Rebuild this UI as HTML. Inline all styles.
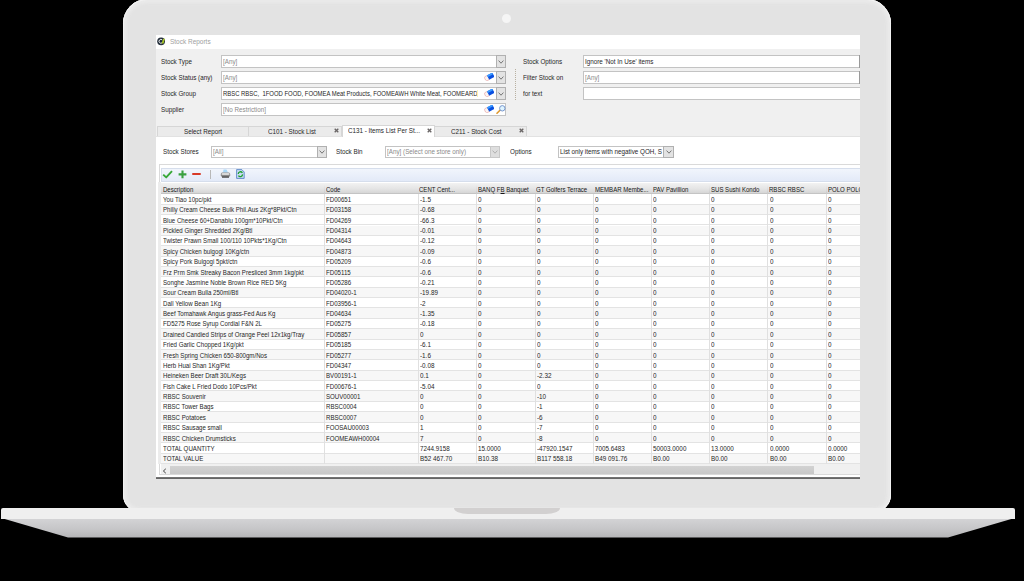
<!DOCTYPE html>
<html><head><meta charset="utf-8">
<style>
html,body{margin:0;padding:0;}
body{width:1024px;height:581px;background:#000;position:relative;overflow:hidden;font-family:"Liberation Sans",sans-serif;}
.a{position:absolute;}
#lid{left:123.1px;top:-1.5px;width:767.9px;height:513px;border-radius:24.5px 24.5px 17px 17px;background:#e3e3e3;box-shadow:inset 0 0 0 1px #f2f2f2, inset 0 0 3px 4px #eaeaea;}
#cam{left:501.5px;top:13.7px;width:9.6px;height:9.6px;border-radius:50%;background:#f5f5f5;}
#bandtop{left:1px;top:508px;width:1014px;height:10.5px;background:#efefef;border-radius:2px 2px 0 0;}
#bandbot{left:0;top:518.5px;width:1024px;height:19px;background:linear-gradient(#d3d3d5,#c4c4c6 60%,#b4b4b6);clip-path:polygon(3px 0,1013px 0,948px 19px,68px 19px);}
#notch{left:454px;top:508px;width:106px;height:6.3px;background:#d2d0d0;border-radius:0 0 14px 14px/0 0 6px 6px;}
#scr{left:156px;top:35px;width:704px;height:444px;overflow:hidden;background:#f0f0f0;}
#pc{left:-156px;top:-35px;width:1024px;height:581px;}
.t{position:absolute;white-space:nowrap;font-size:6.8px;line-height:8px;color:#262626;transform:scaleX(.9);transform-origin:0 0;}
.g{color:#8a8a8a;}
u{text-decoration:underline;}
</style></head><body>
<div id="lid" class="a"></div>
<div id="cam" class="a"></div>
<div id="bandtop" class="a"></div>
<div id="bandbot" class="a"></div>
<div id="notch" class="a"></div>
<div id="scr" class="a">
<div id="pc" class="a">
<div class="a" style="left:156.00px;top:35.00px;width:704.00px;height:13.50px;background:#fff;"></div>
<svg class="a" style="left:157px;top:37px" width="9" height="9" viewBox="0 0 9 9"><circle cx="4.1" cy="4.3" r="3.9" fill="#27313d"/><path d="M5.2 2.9 A1.9 1.9 0 1 0 5.2 5.7" fill="none" stroke="#eef0f2" stroke-width="1.0"/><circle cx="4.0" cy="4.3" r="0.95" fill="#1a2848"/><path d="M4.6 6.6 L6.0 2.0 L7.8 1.4 L6.6 6.4 Z" fill="#a8c820"/></svg>
<div class="t" style="left:169.50px;top:37.60px;transform:scaleX(0.9);color:#a0a0a0;font-size:7.2px;">Stock Reports</div>
<div class="t" style="left:160.50px;top:58.30px;transform:scaleX(0.925);">Stock Type</div>
<div class="t" style="left:160.50px;top:74.30px;transform:scaleX(0.925);">Stock Status (any)</div>
<div class="t" style="left:160.50px;top:90.30px;transform:scaleX(0.925);">Stock Group</div>
<div class="t" style="left:160.50px;top:106.30px;transform:scaleX(0.925);">Supplier</div>
<div class="a" style="left:221.00px;top:55.00px;width:285.20px;height:12.70px;background:#fff;border:1px solid #c3c3c3;box-sizing:border-box;"></div>
<div class="a" style="left:221.00px;top:71.00px;width:285.20px;height:12.70px;background:#fff;border:1px solid #c3c3c3;box-sizing:border-box;"></div>
<div class="a" style="left:221.00px;top:87.00px;width:285.20px;height:12.70px;background:#fff;border:1px solid #c3c3c3;box-sizing:border-box;"></div>
<div class="a" style="left:221.00px;top:103.00px;width:285.20px;height:12.70px;background:#fff;border:1px solid #c3c3c3;box-sizing:border-box;"></div>
<div class="t g" style="left:223.00px;top:58.30px;transform:scaleX(0.925);">[Any]</div>
<div class="t g" style="left:223.00px;top:74.30px;transform:scaleX(0.925);">[Any]</div>
<div class="t" style="left:223.00px;top:90.30px;transform:scaleX(0.87);">RBSC RBSC,&nbsp; 1FOOD FOOD, FOOMEA Meat Products, FOOMEAWH White Meat, FOOMEARD</div>
<div class="t g" style="left:223.00px;top:106.30px;transform:scaleX(0.925);">[No Restriction]</div>
<div class="a" style="left:477.00px;top:89.50px;width:1.20px;height:7.00px;background:#fff2b0;"></div>
<div class="a" style="left:495.90px;top:55.00px;width:10.30px;height:12.70px;background:#e3e3e3;border:1px solid #b0b0b0;box-sizing:border-box;"></div>
<svg class="a" style="left:498.05px;top:59.75px" width="6" height="4" viewBox="0 0 6 4"><path d="M0.6 0.6 L3 3.2 L5.4 0.6" fill="none" stroke="#505050" stroke-width="0.75"/></svg>
<div class="a" style="left:495.90px;top:71.00px;width:10.30px;height:12.70px;background:#e3e3e3;border:1px solid #b0b0b0;box-sizing:border-box;"></div>
<svg class="a" style="left:498.05px;top:75.75px" width="6" height="4" viewBox="0 0 6 4"><path d="M0.6 0.6 L3 3.2 L5.4 0.6" fill="none" stroke="#505050" stroke-width="0.75"/></svg>
<div class="a" style="left:495.90px;top:87.00px;width:10.30px;height:12.70px;background:#e3e3e3;border:1px solid #b0b0b0;box-sizing:border-box;"></div>
<svg class="a" style="left:498.05px;top:91.75px" width="6" height="4" viewBox="0 0 6 4"><path d="M0.6 0.6 L3 3.2 L5.4 0.6" fill="none" stroke="#505050" stroke-width="0.75"/></svg>
<svg class="a" style="left:483.5px;top:72.8px" width="10.5" height="8" viewBox="0 0 10.5 8"><g transform="rotate(-28 5.2 4)"><rect x="0.6" y="1.6" width="4.4" height="4.8" rx="1.6" fill="#fbf4f2" stroke="#e49a9a" stroke-width="0.6"/><rect x="4" y="1.6" width="6" height="4.8" rx="0.9" fill="#0a4fe0"/><rect x="4" y="1.6" width="6" height="1.8" rx="0.7" fill="#3c9cff"/></g></svg>
<svg class="a" style="left:483.5px;top:88.8px" width="10.5" height="8" viewBox="0 0 10.5 8"><g transform="rotate(-28 5.2 4)"><rect x="0.6" y="1.6" width="4.4" height="4.8" rx="1.6" fill="#fbf4f2" stroke="#e49a9a" stroke-width="0.6"/><rect x="4" y="1.6" width="6" height="4.8" rx="0.9" fill="#0a4fe0"/><rect x="4" y="1.6" width="6" height="1.8" rx="0.7" fill="#3c9cff"/></g></svg>
<svg class="a" style="left:483.5px;top:104.8px" width="10.5" height="8" viewBox="0 0 10.5 8"><g transform="rotate(-28 5.2 4)"><rect x="0.6" y="1.6" width="4.4" height="4.8" rx="1.6" fill="#fbf4f2" stroke="#e49a9a" stroke-width="0.6"/><rect x="4" y="1.6" width="6" height="4.8" rx="0.9" fill="#0a4fe0"/><rect x="4" y="1.6" width="6" height="1.8" rx="0.7" fill="#3c9cff"/></g></svg>
<svg class="a" style="left:495.8px;top:104.6px" width="10" height="9" viewBox="0 0 10 9"><line x1="1" y1="8.2" x2="4" y2="5.2" stroke="#e09a30" stroke-width="1.6" stroke-linecap="round"/><circle cx="6.3" cy="3.3" r="2.7" fill="#dff4ff" stroke="#6a8cc8" stroke-width="0.9"/></svg>
<div class="a" style="left:515.30px;top:69.00px;width:1.00px;height:32.00px;background:repeating-linear-gradient(#b8b0a0 0 1px,transparent 1px 2px);"></div>
<div class="t" style="left:522.80px;top:58.30px;transform:scaleX(0.925);">Stock Options</div>
<div class="t" style="left:522.80px;top:74.30px;transform:scaleX(0.925);">Filter Stock on</div>
<div class="t" style="left:522.80px;top:90.30px;transform:scaleX(0.925);">for text</div>
<div class="a" style="left:583.40px;top:55.00px;width:290.00px;height:12.70px;background:#fff;border:1px solid #c3c3c3;box-sizing:border-box;"></div>
<div class="a" style="left:583.40px;top:71.00px;width:290.00px;height:12.70px;background:#fff;border:1px solid #c3c3c3;box-sizing:border-box;"></div>
<div class="a" style="left:583.40px;top:87.00px;width:290.00px;height:12.70px;background:#fff;border:1px solid #c3c3c3;box-sizing:border-box;"></div>
<div class="a" style="left:858.60px;top:55.00px;width:1.40px;height:12.70px;background:#9a9a9a;"></div>
<div class="a" style="left:858.60px;top:71.00px;width:1.40px;height:12.70px;background:#9a9a9a;"></div>
<div class="t" style="left:585.00px;top:58.30px;transform:scaleX(0.925);">Ignore 'Not In Use' items</div>
<div class="t g" style="left:585.00px;top:74.30px;transform:scaleX(0.925);">[Any]</div>
<div class="a" style="left:157.00px;top:126.00px;width:92.40px;height:10.20px;background:#ebebeb;border:1px solid #d6d6d6;border-bottom:none;box-sizing:border-box;"></div>
<div class="a" style="left:249.40px;top:126.00px;width:92.60px;height:10.20px;background:#ebebeb;border:1px solid #d6d6d6;border-bottom:none;box-sizing:border-box;border-left:none;"></div>
<div class="a" style="left:435.30px;top:126.00px;width:91.60px;height:10.20px;background:#ebebeb;border:1px solid #d6d6d6;border-bottom:none;box-sizing:border-box;border-left:none;"></div>
<div class="a" style="left:156.00px;top:136.00px;width:704.00px;height:342.00px;background:#fff;border-top:1px solid #e2e2e2;box-sizing:border-box;"></div>
<div class="a" style="left:342.00px;top:125.00px;width:93.30px;height:12.00px;background:#fff;border:1px solid #d6d6d6;border-bottom:none;box-sizing:border-box;"></div>
<div class="t" style="left:184.00px;top:127.70px;transform:scaleX(0.925);">Select Report</div>
<div class="t" style="left:268.00px;top:127.70px;transform:scaleX(0.925);">C101 - Stock List</div>
<div class="t" style="left:347.80px;top:127.30px;transform:scaleX(0.925);">C131 - Items List Per St...</div>
<div class="t" style="left:451.00px;top:127.70px;transform:scaleX(0.925);">C211 - Stock Cost</div>
<svg class="a" style="left:334.3px;top:128.2px" width="5" height="5" viewBox="0 0 5 5"><path d="M0.7 0.7 L4.3 4.3 M4.3 0.7 L0.7 4.3" stroke="#6a6666" stroke-width="1.35"/></svg>
<svg class="a" style="left:427.3px;top:127.8px" width="5" height="5" viewBox="0 0 5 5"><path d="M0.7 0.7 L4.3 4.3 M4.3 0.7 L0.7 4.3" stroke="#6a6666" stroke-width="1.35"/></svg>
<svg class="a" style="left:519.3px;top:128.2px" width="5" height="5" viewBox="0 0 5 5"><path d="M0.7 0.7 L4.3 4.3 M4.3 0.7 L0.7 4.3" stroke="#6a6666" stroke-width="1.35"/></svg>
<div class="t" style="left:162.70px;top:147.80px;transform:scaleX(0.925);">Stock Stores</div>
<div class="a" style="left:211.30px;top:145.50px;width:115.50px;height:12.00px;background:#fff;border:1px solid #c3c3c3;box-sizing:border-box;"></div>
<div class="a" style="left:317.00px;top:145.50px;width:9.80px;height:12.00px;background:#e3e3e3;border:1px solid #b0b0b0;box-sizing:border-box;"></div>
<svg class="a" style="left:318.90px;top:149.90px" width="6" height="4" viewBox="0 0 6 4"><path d="M0.6 0.6 L3 3.2 L5.4 0.6" fill="none" stroke="#505050" stroke-width="0.75"/></svg>
<div class="t g" style="left:213.00px;top:147.80px;transform:scaleX(0.925);">[All]</div>
<div class="t" style="left:336.00px;top:147.80px;transform:scaleX(0.925);">Stock Bin</div>
<div class="a" style="left:385.30px;top:145.50px;width:114.80px;height:12.00px;background:#fff;border:1px solid #c3c3c3;box-sizing:border-box;"></div>
<div class="a" style="left:490.00px;top:145.50px;width:10.00px;height:12.00px;background:#dedede;border:1px solid #c8c8c8;box-sizing:border-box;"></div>
<svg class="a" style="left:492.00px;top:149.90px" width="6" height="4" viewBox="0 0 6 4"><path d="M0.6 0.6 L3 3.2 L5.4 0.6" fill="none" stroke="#a0a0a0" stroke-width="0.75"/></svg>
<div class="t g" style="left:387.00px;top:147.80px;transform:scaleX(0.925);">[Any] (Select one store only)</div>
<div class="t" style="left:509.50px;top:147.80px;transform:scaleX(0.925);">Options</div>
<div class="a" style="left:558.40px;top:145.50px;width:115.20px;height:12.00px;background:#fff;border:1px solid #c3c3c3;box-sizing:border-box;"></div>
<div class="a" style="left:663.40px;top:145.50px;width:10.20px;height:12.00px;background:#e3e3e3;border:1px solid #b0b0b0;box-sizing:border-box;"></div>
<svg class="a" style="left:665.50px;top:149.90px" width="6" height="4" viewBox="0 0 6 4"><path d="M0.6 0.6 L3 3.2 L5.4 0.6" fill="none" stroke="#505050" stroke-width="0.75"/></svg>
<div class="t" style="left:560.00px;top:147.80px;transform:scaleX(0.925);">List only items with negative QOH, S</div>
<div class="a" style="left:158.50px;top:164.30px;width:710.00px;height:311.20px;background:#fff;border:1px solid #dadada;box-sizing:border-box;"></div>
<div class="a" style="left:157.60px;top:182.00px;width:3.40px;height:282.00px;background:#ececec;"></div>
<div class="a" style="left:160.50px;top:167.50px;width:700.00px;height:14.30px;background:linear-gradient(#f1f5fc,#e3eaf8);border:1px solid #d6deec;box-sizing:border-box;"></div>
<svg class="a" style="left:162px;top:170px" width="11" height="9" viewBox="0 0 11 9"><path d="M1.2 4.6 L4.2 7.4 L10 1.2" fill="none" stroke="#38a838" stroke-width="1.9" stroke-linejoin="round"/></svg>
<svg class="a" style="left:177.5px;top:170px" width="9" height="9" viewBox="0 0 9 9"><path d="M4.5 0.6 V8.2 M0.6 4.4 H8.4" stroke="#3aa040" stroke-width="2.1"/></svg>
<div class="a" style="left:192.00px;top:173.20px;width:9.00px;height:2.10px;background:#d83a28;border-radius:1px;"></div>
<div class="a" style="left:210.20px;top:169.50px;width:0.90px;height:9.00px;background:#b8b8b8;"></div>
<svg class="a" style="left:220px;top:169px" width="11" height="10" viewBox="0 0 11 10"><path d="M3.5 0.5 L6.5 0.5 L8 3.5 L3 3.5 Z" fill="#a8d8f8"/><rect x="0.8" y="3.6" width="9.4" height="4.2" rx="1.5" fill="#8a8a8a"/><rect x="1.5" y="4" width="8" height="2" rx="1" fill="#d8d8d8"/><rect x="2" y="7.2" width="7" height="1.6" fill="#555"/></svg>
<svg class="a" style="left:236px;top:169.3px" width="9" height="10" viewBox="0 0 9 10"><path d="M0.6 0.6 H5.8 L8.2 3 V9.4 H0.6 Z" fill="#c8dcf4" stroke="#4a78c0" stroke-width="0.8"/><path d="M2.2 5 A2.3 2.3 0 0 1 6.4 3.8 M6.6 5.4 A2.3 2.3 0 0 1 2.4 6.6" fill="none" stroke="#20a030" stroke-width="1.3"/></svg>
<div class="a" style="left:161.00px;top:183.00px;width:700.00px;height:11.40px;background:linear-gradient(#f2f2f2,#e4e4e4 60%,#d6d6d6);border-bottom:1px solid #c4c4c4;box-sizing:border-box;"></div>
<div class="a" style="left:324.00px;top:183.00px;width:0.80px;height:11.40px;background:linear-gradient(#f4f4f4,#c8c8c8);"></div>
<div class="a" style="left:417.60px;top:183.00px;width:0.80px;height:11.40px;background:linear-gradient(#f4f4f4,#c8c8c8);"></div>
<div class="a" style="left:476.00px;top:183.00px;width:0.80px;height:11.40px;background:linear-gradient(#f4f4f4,#c8c8c8);"></div>
<div class="a" style="left:534.50px;top:183.00px;width:0.80px;height:11.40px;background:linear-gradient(#f4f4f4,#c8c8c8);"></div>
<div class="a" style="left:592.70px;top:183.00px;width:0.80px;height:11.40px;background:linear-gradient(#f4f4f4,#c8c8c8);"></div>
<div class="a" style="left:650.70px;top:183.00px;width:0.80px;height:11.40px;background:linear-gradient(#f4f4f4,#c8c8c8);"></div>
<div class="a" style="left:708.80px;top:183.00px;width:0.80px;height:11.40px;background:linear-gradient(#f4f4f4,#c8c8c8);"></div>
<div class="a" style="left:767.40px;top:183.00px;width:0.80px;height:11.40px;background:linear-gradient(#f4f4f4,#c8c8c8);"></div>
<div class="a" style="left:826.00px;top:183.00px;width:0.80px;height:11.40px;background:linear-gradient(#f4f4f4,#c8c8c8);"></div>
<div class="t" style="left:162.80px;top:186.10px;transform:scaleX(0.89);color:#161616;">Description</div>
<div class="t" style="left:325.80px;top:186.10px;transform:scaleX(0.89);color:#161616;">Code</div>
<div class="t" style="left:419.40px;top:186.10px;transform:scaleX(0.89);color:#161616;">CENT Cent...</div>
<div class="t" style="left:477.80px;top:186.10px;transform:scaleX(0.89);color:#161616;">BANQ F<u>B</u> Banquet</div>
<div class="t" style="left:536.30px;top:186.10px;transform:scaleX(0.89);color:#161616;">GT Golfers Terrace</div>
<div class="t" style="left:594.50px;top:186.10px;transform:scaleX(0.89);color:#161616;">MEMBAR Membe...</div>
<div class="t" style="left:652.50px;top:186.10px;transform:scaleX(0.89);color:#161616;">PAV Pavillion</div>
<div class="t" style="left:710.60px;top:186.10px;transform:scaleX(0.89);color:#161616;">SUS Sushi Kondo</div>
<div class="t" style="left:769.20px;top:186.10px;transform:scaleX(0.89);color:#161616;">RBSC RBSC</div>
<div class="t" style="left:827.80px;top:186.10px;transform:scaleX(0.89);color:#161616;">POLO POLO</div>
<div class="a" style="left:161.00px;top:194.40px;width:700.00px;height:10.37px;background:#ffffff;border-bottom:1px solid #e3e3e3;box-sizing:border-box;"></div>
<div class="a" style="left:161.00px;top:204.77px;width:700.00px;height:10.37px;background:#f7f7f7;border-bottom:1px solid #e3e3e3;box-sizing:border-box;"></div>
<div class="a" style="left:161.00px;top:215.14px;width:700.00px;height:10.37px;background:#ffffff;border-bottom:1px solid #e3e3e3;box-sizing:border-box;"></div>
<div class="a" style="left:161.00px;top:225.51px;width:700.00px;height:10.37px;background:#f7f7f7;border-bottom:1px solid #e3e3e3;box-sizing:border-box;"></div>
<div class="a" style="left:161.00px;top:235.88px;width:700.00px;height:10.37px;background:#ffffff;border-bottom:1px solid #e3e3e3;box-sizing:border-box;"></div>
<div class="a" style="left:161.00px;top:246.25px;width:700.00px;height:10.37px;background:#f7f7f7;border-bottom:1px solid #e3e3e3;box-sizing:border-box;"></div>
<div class="a" style="left:161.00px;top:256.62px;width:700.00px;height:10.37px;background:#ffffff;border-bottom:1px solid #e3e3e3;box-sizing:border-box;"></div>
<div class="a" style="left:161.00px;top:266.99px;width:700.00px;height:10.37px;background:#f7f7f7;border-bottom:1px solid #e3e3e3;box-sizing:border-box;"></div>
<div class="a" style="left:161.00px;top:277.36px;width:700.00px;height:10.37px;background:#ffffff;border-bottom:1px solid #e3e3e3;box-sizing:border-box;"></div>
<div class="a" style="left:161.00px;top:287.73px;width:700.00px;height:10.37px;background:#f7f7f7;border-bottom:1px solid #e3e3e3;box-sizing:border-box;"></div>
<div class="a" style="left:161.00px;top:298.10px;width:700.00px;height:10.37px;background:#ffffff;border-bottom:1px solid #e3e3e3;box-sizing:border-box;"></div>
<div class="a" style="left:161.00px;top:308.47px;width:700.00px;height:10.37px;background:#f7f7f7;border-bottom:1px solid #e3e3e3;box-sizing:border-box;"></div>
<div class="a" style="left:161.00px;top:318.84px;width:700.00px;height:10.37px;background:#ffffff;border-bottom:1px solid #e3e3e3;box-sizing:border-box;"></div>
<div class="a" style="left:161.00px;top:329.21px;width:700.00px;height:10.37px;background:#f7f7f7;border-bottom:1px solid #e3e3e3;box-sizing:border-box;"></div>
<div class="a" style="left:161.00px;top:339.58px;width:700.00px;height:10.37px;background:#ffffff;border-bottom:1px solid #e3e3e3;box-sizing:border-box;"></div>
<div class="a" style="left:161.00px;top:349.95px;width:700.00px;height:10.37px;background:#f7f7f7;border-bottom:1px solid #e3e3e3;box-sizing:border-box;"></div>
<div class="a" style="left:161.00px;top:360.32px;width:700.00px;height:10.37px;background:#ffffff;border-bottom:1px solid #e3e3e3;box-sizing:border-box;"></div>
<div class="a" style="left:161.00px;top:370.69px;width:700.00px;height:10.37px;background:#f7f7f7;border-bottom:1px solid #e3e3e3;box-sizing:border-box;"></div>
<div class="a" style="left:161.00px;top:381.06px;width:700.00px;height:10.37px;background:#ffffff;border-bottom:1px solid #e3e3e3;box-sizing:border-box;"></div>
<div class="a" style="left:161.00px;top:391.43px;width:700.00px;height:10.37px;background:#f7f7f7;border-bottom:1px solid #e3e3e3;box-sizing:border-box;"></div>
<div class="a" style="left:161.00px;top:401.80px;width:700.00px;height:10.37px;background:#ffffff;border-bottom:1px solid #e3e3e3;box-sizing:border-box;"></div>
<div class="a" style="left:161.00px;top:412.17px;width:700.00px;height:10.37px;background:#f7f7f7;border-bottom:1px solid #e3e3e3;box-sizing:border-box;"></div>
<div class="a" style="left:161.00px;top:422.54px;width:700.00px;height:10.37px;background:#ffffff;border-bottom:1px solid #e3e3e3;box-sizing:border-box;"></div>
<div class="a" style="left:161.00px;top:432.91px;width:700.00px;height:10.37px;background:#f7f7f7;border-bottom:1px solid #e3e3e3;box-sizing:border-box;"></div>
<div class="a" style="left:161.00px;top:443.28px;width:700.00px;height:10.37px;background:#ffffff;border-bottom:1px solid #e3e3e3;box-sizing:border-box;"></div>
<div class="a" style="left:161.00px;top:453.65px;width:700.00px;height:10.37px;background:#f7f7f7;border-bottom:1px solid #e3e3e3;box-sizing:border-box;"></div>
<div class="a" style="left:324.00px;top:194.40px;width:0.80px;height:269.62px;background:#e0e0e0;"></div>
<div class="a" style="left:417.60px;top:194.40px;width:0.80px;height:269.62px;background:#e0e0e0;"></div>
<div class="a" style="left:476.00px;top:194.40px;width:0.80px;height:269.62px;background:#e0e0e0;"></div>
<div class="a" style="left:534.50px;top:194.40px;width:0.80px;height:269.62px;background:#e0e0e0;"></div>
<div class="a" style="left:592.70px;top:194.40px;width:0.80px;height:269.62px;background:#e0e0e0;"></div>
<div class="a" style="left:650.70px;top:194.40px;width:0.80px;height:269.62px;background:#e0e0e0;"></div>
<div class="a" style="left:708.80px;top:194.40px;width:0.80px;height:269.62px;background:#e0e0e0;"></div>
<div class="a" style="left:767.40px;top:194.40px;width:0.80px;height:269.62px;background:#e0e0e0;"></div>
<div class="a" style="left:826.00px;top:194.40px;width:0.80px;height:269.62px;background:#e0e0e0;"></div>
<div class="t" style="left:162.80px;top:196.00px;transform:scaleX(0.9);">You Tiao 10pc/pkt</div>
<div class="t" style="left:325.80px;top:196.00px;transform:scaleX(0.9);">FD00651</div>
<div class="t" style="left:420.00px;top:196.00px;transform:scaleX(0.93);">-1.5</div>
<div class="t" style="left:478.40px;top:196.00px;transform:scaleX(0.93);">0</div>
<div class="t" style="left:536.90px;top:196.00px;transform:scaleX(0.93);">0</div>
<div class="t" style="left:595.10px;top:196.00px;transform:scaleX(0.93);">0</div>
<div class="t" style="left:653.10px;top:196.00px;transform:scaleX(0.93);">0</div>
<div class="t" style="left:711.20px;top:196.00px;transform:scaleX(0.93);">0</div>
<div class="t" style="left:769.80px;top:196.00px;transform:scaleX(0.93);">0</div>
<div class="t" style="left:828.40px;top:196.00px;transform:scaleX(0.93);">0</div>
<div class="t" style="left:162.80px;top:206.37px;transform:scaleX(0.9);">Philly Cream Cheese Bulk Phil.Aus 2Kg*8Pkt/Ctn</div>
<div class="t" style="left:325.80px;top:206.37px;transform:scaleX(0.9);">FD03158</div>
<div class="t" style="left:420.00px;top:206.37px;transform:scaleX(0.93);">-0.68</div>
<div class="t" style="left:478.40px;top:206.37px;transform:scaleX(0.93);">0</div>
<div class="t" style="left:536.90px;top:206.37px;transform:scaleX(0.93);">0</div>
<div class="t" style="left:595.10px;top:206.37px;transform:scaleX(0.93);">0</div>
<div class="t" style="left:653.10px;top:206.37px;transform:scaleX(0.93);">0</div>
<div class="t" style="left:711.20px;top:206.37px;transform:scaleX(0.93);">0</div>
<div class="t" style="left:769.80px;top:206.37px;transform:scaleX(0.93);">0</div>
<div class="t" style="left:828.40px;top:206.37px;transform:scaleX(0.93);">0</div>
<div class="t" style="left:162.80px;top:216.74px;transform:scaleX(0.9);">Blue Cheese 60+Danablu 100gm*10Pkt/Ctn</div>
<div class="t" style="left:325.80px;top:216.74px;transform:scaleX(0.9);">FD04269</div>
<div class="t" style="left:420.00px;top:216.74px;transform:scaleX(0.93);">-66.3</div>
<div class="t" style="left:478.40px;top:216.74px;transform:scaleX(0.93);">0</div>
<div class="t" style="left:536.90px;top:216.74px;transform:scaleX(0.93);">0</div>
<div class="t" style="left:595.10px;top:216.74px;transform:scaleX(0.93);">0</div>
<div class="t" style="left:653.10px;top:216.74px;transform:scaleX(0.93);">0</div>
<div class="t" style="left:711.20px;top:216.74px;transform:scaleX(0.93);">0</div>
<div class="t" style="left:769.80px;top:216.74px;transform:scaleX(0.93);">0</div>
<div class="t" style="left:828.40px;top:216.74px;transform:scaleX(0.93);">0</div>
<div class="t" style="left:162.80px;top:227.11px;transform:scaleX(0.9);">Pickled Ginger Shredded 2Kg/Btl</div>
<div class="t" style="left:325.80px;top:227.11px;transform:scaleX(0.9);">FD04314</div>
<div class="t" style="left:420.00px;top:227.11px;transform:scaleX(0.93);">-0.01</div>
<div class="t" style="left:478.40px;top:227.11px;transform:scaleX(0.93);">0</div>
<div class="t" style="left:536.90px;top:227.11px;transform:scaleX(0.93);">0</div>
<div class="t" style="left:595.10px;top:227.11px;transform:scaleX(0.93);">0</div>
<div class="t" style="left:653.10px;top:227.11px;transform:scaleX(0.93);">0</div>
<div class="t" style="left:711.20px;top:227.11px;transform:scaleX(0.93);">0</div>
<div class="t" style="left:769.80px;top:227.11px;transform:scaleX(0.93);">0</div>
<div class="t" style="left:828.40px;top:227.11px;transform:scaleX(0.93);">0</div>
<div class="t" style="left:162.80px;top:237.48px;transform:scaleX(0.9);">Twister Prawn Small 100/110 10Pkts*1Kg/Ctn</div>
<div class="t" style="left:325.80px;top:237.48px;transform:scaleX(0.9);">FD04643</div>
<div class="t" style="left:420.00px;top:237.48px;transform:scaleX(0.93);">-0.12</div>
<div class="t" style="left:478.40px;top:237.48px;transform:scaleX(0.93);">0</div>
<div class="t" style="left:536.90px;top:237.48px;transform:scaleX(0.93);">0</div>
<div class="t" style="left:595.10px;top:237.48px;transform:scaleX(0.93);">0</div>
<div class="t" style="left:653.10px;top:237.48px;transform:scaleX(0.93);">0</div>
<div class="t" style="left:711.20px;top:237.48px;transform:scaleX(0.93);">0</div>
<div class="t" style="left:769.80px;top:237.48px;transform:scaleX(0.93);">0</div>
<div class="t" style="left:828.40px;top:237.48px;transform:scaleX(0.93);">0</div>
<div class="t" style="left:162.80px;top:247.85px;transform:scaleX(0.9);">Spicy Chicken bulgogi 10Kg/ctn</div>
<div class="t" style="left:325.80px;top:247.85px;transform:scaleX(0.9);">FD04873</div>
<div class="t" style="left:420.00px;top:247.85px;transform:scaleX(0.93);">-0.09</div>
<div class="t" style="left:478.40px;top:247.85px;transform:scaleX(0.93);">0</div>
<div class="t" style="left:536.90px;top:247.85px;transform:scaleX(0.93);">0</div>
<div class="t" style="left:595.10px;top:247.85px;transform:scaleX(0.93);">0</div>
<div class="t" style="left:653.10px;top:247.85px;transform:scaleX(0.93);">0</div>
<div class="t" style="left:711.20px;top:247.85px;transform:scaleX(0.93);">0</div>
<div class="t" style="left:769.80px;top:247.85px;transform:scaleX(0.93);">0</div>
<div class="t" style="left:828.40px;top:247.85px;transform:scaleX(0.93);">0</div>
<div class="t" style="left:162.80px;top:258.22px;transform:scaleX(0.9);">Spicy Pork Bulgogi 5pkt/ctn</div>
<div class="t" style="left:325.80px;top:258.22px;transform:scaleX(0.9);">FD05209</div>
<div class="t" style="left:420.00px;top:258.22px;transform:scaleX(0.93);">-0.6</div>
<div class="t" style="left:478.40px;top:258.22px;transform:scaleX(0.93);">0</div>
<div class="t" style="left:536.90px;top:258.22px;transform:scaleX(0.93);">0</div>
<div class="t" style="left:595.10px;top:258.22px;transform:scaleX(0.93);">0</div>
<div class="t" style="left:653.10px;top:258.22px;transform:scaleX(0.93);">0</div>
<div class="t" style="left:711.20px;top:258.22px;transform:scaleX(0.93);">0</div>
<div class="t" style="left:769.80px;top:258.22px;transform:scaleX(0.93);">0</div>
<div class="t" style="left:828.40px;top:258.22px;transform:scaleX(0.93);">0</div>
<div class="t" style="left:162.80px;top:268.59px;transform:scaleX(0.9);">Frz Prm Smk Streaky Bacon Presliced 3mm 1kg/pkt</div>
<div class="t" style="left:325.80px;top:268.59px;transform:scaleX(0.9);">FD05115</div>
<div class="t" style="left:420.00px;top:268.59px;transform:scaleX(0.93);">-0.6</div>
<div class="t" style="left:478.40px;top:268.59px;transform:scaleX(0.93);">0</div>
<div class="t" style="left:536.90px;top:268.59px;transform:scaleX(0.93);">0</div>
<div class="t" style="left:595.10px;top:268.59px;transform:scaleX(0.93);">0</div>
<div class="t" style="left:653.10px;top:268.59px;transform:scaleX(0.93);">0</div>
<div class="t" style="left:711.20px;top:268.59px;transform:scaleX(0.93);">0</div>
<div class="t" style="left:769.80px;top:268.59px;transform:scaleX(0.93);">0</div>
<div class="t" style="left:828.40px;top:268.59px;transform:scaleX(0.93);">0</div>
<div class="t" style="left:162.80px;top:278.96px;transform:scaleX(0.9);">Songhe Jasmine Noble Brown Rice RED 5Kg</div>
<div class="t" style="left:325.80px;top:278.96px;transform:scaleX(0.9);">FD05286</div>
<div class="t" style="left:420.00px;top:278.96px;transform:scaleX(0.93);">-0.21</div>
<div class="t" style="left:478.40px;top:278.96px;transform:scaleX(0.93);">0</div>
<div class="t" style="left:536.90px;top:278.96px;transform:scaleX(0.93);">0</div>
<div class="t" style="left:595.10px;top:278.96px;transform:scaleX(0.93);">0</div>
<div class="t" style="left:653.10px;top:278.96px;transform:scaleX(0.93);">0</div>
<div class="t" style="left:711.20px;top:278.96px;transform:scaleX(0.93);">0</div>
<div class="t" style="left:769.80px;top:278.96px;transform:scaleX(0.93);">0</div>
<div class="t" style="left:828.40px;top:278.96px;transform:scaleX(0.93);">0</div>
<div class="t" style="left:162.80px;top:289.33px;transform:scaleX(0.9);">Sour Cream Bulla 250ml/Btl</div>
<div class="t" style="left:325.80px;top:289.33px;transform:scaleX(0.9);">FD04020-1</div>
<div class="t" style="left:420.00px;top:289.33px;transform:scaleX(0.93);">-19.89</div>
<div class="t" style="left:478.40px;top:289.33px;transform:scaleX(0.93);">0</div>
<div class="t" style="left:536.90px;top:289.33px;transform:scaleX(0.93);">0</div>
<div class="t" style="left:595.10px;top:289.33px;transform:scaleX(0.93);">0</div>
<div class="t" style="left:653.10px;top:289.33px;transform:scaleX(0.93);">0</div>
<div class="t" style="left:711.20px;top:289.33px;transform:scaleX(0.93);">0</div>
<div class="t" style="left:769.80px;top:289.33px;transform:scaleX(0.93);">0</div>
<div class="t" style="left:828.40px;top:289.33px;transform:scaleX(0.93);">0</div>
<div class="t" style="left:162.80px;top:299.70px;transform:scaleX(0.9);">Dall Yellow Bean 1Kg</div>
<div class="t" style="left:325.80px;top:299.70px;transform:scaleX(0.9);">FD03956-1</div>
<div class="t" style="left:420.00px;top:299.70px;transform:scaleX(0.93);">-2</div>
<div class="t" style="left:478.40px;top:299.70px;transform:scaleX(0.93);">0</div>
<div class="t" style="left:536.90px;top:299.70px;transform:scaleX(0.93);">0</div>
<div class="t" style="left:595.10px;top:299.70px;transform:scaleX(0.93);">0</div>
<div class="t" style="left:653.10px;top:299.70px;transform:scaleX(0.93);">0</div>
<div class="t" style="left:711.20px;top:299.70px;transform:scaleX(0.93);">0</div>
<div class="t" style="left:769.80px;top:299.70px;transform:scaleX(0.93);">0</div>
<div class="t" style="left:828.40px;top:299.70px;transform:scaleX(0.93);">0</div>
<div class="t" style="left:162.80px;top:310.07px;transform:scaleX(0.9);">Beef Tomahawk Angus grass-Fed Aus Kg</div>
<div class="t" style="left:325.80px;top:310.07px;transform:scaleX(0.9);">FD04634</div>
<div class="t" style="left:420.00px;top:310.07px;transform:scaleX(0.93);">-1.35</div>
<div class="t" style="left:478.40px;top:310.07px;transform:scaleX(0.93);">0</div>
<div class="t" style="left:536.90px;top:310.07px;transform:scaleX(0.93);">0</div>
<div class="t" style="left:595.10px;top:310.07px;transform:scaleX(0.93);">0</div>
<div class="t" style="left:653.10px;top:310.07px;transform:scaleX(0.93);">0</div>
<div class="t" style="left:711.20px;top:310.07px;transform:scaleX(0.93);">0</div>
<div class="t" style="left:769.80px;top:310.07px;transform:scaleX(0.93);">0</div>
<div class="t" style="left:828.40px;top:310.07px;transform:scaleX(0.93);">0</div>
<div class="t" style="left:162.80px;top:320.44px;transform:scaleX(0.9);">FD5275 Rose Syrup Cordial F&amp;N 2L</div>
<div class="t" style="left:325.80px;top:320.44px;transform:scaleX(0.9);">FD05275</div>
<div class="t" style="left:420.00px;top:320.44px;transform:scaleX(0.93);">-0.18</div>
<div class="t" style="left:478.40px;top:320.44px;transform:scaleX(0.93);">0</div>
<div class="t" style="left:536.90px;top:320.44px;transform:scaleX(0.93);">0</div>
<div class="t" style="left:595.10px;top:320.44px;transform:scaleX(0.93);">0</div>
<div class="t" style="left:653.10px;top:320.44px;transform:scaleX(0.93);">0</div>
<div class="t" style="left:711.20px;top:320.44px;transform:scaleX(0.93);">0</div>
<div class="t" style="left:769.80px;top:320.44px;transform:scaleX(0.93);">0</div>
<div class="t" style="left:828.40px;top:320.44px;transform:scaleX(0.93);">0</div>
<div class="t" style="left:162.80px;top:330.81px;transform:scaleX(0.9);">Drained Candied Strips of Orange Peel 12x1kg/Tray</div>
<div class="t" style="left:325.80px;top:330.81px;transform:scaleX(0.9);">FD05857</div>
<div class="t" style="left:420.00px;top:330.81px;transform:scaleX(0.93);">0</div>
<div class="t" style="left:478.40px;top:330.81px;transform:scaleX(0.93);">0</div>
<div class="t" style="left:536.90px;top:330.81px;transform:scaleX(0.93);">0</div>
<div class="t" style="left:595.10px;top:330.81px;transform:scaleX(0.93);">0</div>
<div class="t" style="left:653.10px;top:330.81px;transform:scaleX(0.93);">0</div>
<div class="t" style="left:711.20px;top:330.81px;transform:scaleX(0.93);">0</div>
<div class="t" style="left:769.80px;top:330.81px;transform:scaleX(0.93);">0</div>
<div class="t" style="left:828.40px;top:330.81px;transform:scaleX(0.93);">0</div>
<div class="t" style="left:162.80px;top:341.18px;transform:scaleX(0.9);">Fried Garlic Chopped 1Kg/pkt</div>
<div class="t" style="left:325.80px;top:341.18px;transform:scaleX(0.9);">FD05185</div>
<div class="t" style="left:420.00px;top:341.18px;transform:scaleX(0.93);">-6.1</div>
<div class="t" style="left:478.40px;top:341.18px;transform:scaleX(0.93);">0</div>
<div class="t" style="left:536.90px;top:341.18px;transform:scaleX(0.93);">0</div>
<div class="t" style="left:595.10px;top:341.18px;transform:scaleX(0.93);">0</div>
<div class="t" style="left:653.10px;top:341.18px;transform:scaleX(0.93);">0</div>
<div class="t" style="left:711.20px;top:341.18px;transform:scaleX(0.93);">0</div>
<div class="t" style="left:769.80px;top:341.18px;transform:scaleX(0.93);">0</div>
<div class="t" style="left:828.40px;top:341.18px;transform:scaleX(0.93);">0</div>
<div class="t" style="left:162.80px;top:351.55px;transform:scaleX(0.9);">Fresh Spring Chicken 650-800gm/Nos</div>
<div class="t" style="left:325.80px;top:351.55px;transform:scaleX(0.9);">FD05277</div>
<div class="t" style="left:420.00px;top:351.55px;transform:scaleX(0.93);">-1.6</div>
<div class="t" style="left:478.40px;top:351.55px;transform:scaleX(0.93);">0</div>
<div class="t" style="left:536.90px;top:351.55px;transform:scaleX(0.93);">0</div>
<div class="t" style="left:595.10px;top:351.55px;transform:scaleX(0.93);">0</div>
<div class="t" style="left:653.10px;top:351.55px;transform:scaleX(0.93);">0</div>
<div class="t" style="left:711.20px;top:351.55px;transform:scaleX(0.93);">0</div>
<div class="t" style="left:769.80px;top:351.55px;transform:scaleX(0.93);">0</div>
<div class="t" style="left:828.40px;top:351.55px;transform:scaleX(0.93);">0</div>
<div class="t" style="left:162.80px;top:361.92px;transform:scaleX(0.9);">Herb Huai Shan 1Kg/Pkt</div>
<div class="t" style="left:325.80px;top:361.92px;transform:scaleX(0.9);">FD04347</div>
<div class="t" style="left:420.00px;top:361.92px;transform:scaleX(0.93);">-0.08</div>
<div class="t" style="left:478.40px;top:361.92px;transform:scaleX(0.93);">0</div>
<div class="t" style="left:536.90px;top:361.92px;transform:scaleX(0.93);">0</div>
<div class="t" style="left:595.10px;top:361.92px;transform:scaleX(0.93);">0</div>
<div class="t" style="left:653.10px;top:361.92px;transform:scaleX(0.93);">0</div>
<div class="t" style="left:711.20px;top:361.92px;transform:scaleX(0.93);">0</div>
<div class="t" style="left:769.80px;top:361.92px;transform:scaleX(0.93);">0</div>
<div class="t" style="left:828.40px;top:361.92px;transform:scaleX(0.93);">0</div>
<div class="t" style="left:162.80px;top:372.29px;transform:scaleX(0.9);">Heineken Beer Draft 30L/Kegs</div>
<div class="t" style="left:325.80px;top:372.29px;transform:scaleX(0.9);">BV00191-1</div>
<div class="t" style="left:420.00px;top:372.29px;transform:scaleX(0.93);">0.1</div>
<div class="t" style="left:478.40px;top:372.29px;transform:scaleX(0.93);">0</div>
<div class="t" style="left:536.90px;top:372.29px;transform:scaleX(0.93);">-2.32</div>
<div class="t" style="left:595.10px;top:372.29px;transform:scaleX(0.93);">0</div>
<div class="t" style="left:653.10px;top:372.29px;transform:scaleX(0.93);">0</div>
<div class="t" style="left:711.20px;top:372.29px;transform:scaleX(0.93);">0</div>
<div class="t" style="left:769.80px;top:372.29px;transform:scaleX(0.93);">0</div>
<div class="t" style="left:828.40px;top:372.29px;transform:scaleX(0.93);">0</div>
<div class="t" style="left:162.80px;top:382.66px;transform:scaleX(0.9);">Fish Cake L Fried Dodo 10Pcs/Pkt</div>
<div class="t" style="left:325.80px;top:382.66px;transform:scaleX(0.9);">FD00676-1</div>
<div class="t" style="left:420.00px;top:382.66px;transform:scaleX(0.93);">-5.04</div>
<div class="t" style="left:478.40px;top:382.66px;transform:scaleX(0.93);">0</div>
<div class="t" style="left:536.90px;top:382.66px;transform:scaleX(0.93);">0</div>
<div class="t" style="left:595.10px;top:382.66px;transform:scaleX(0.93);">0</div>
<div class="t" style="left:653.10px;top:382.66px;transform:scaleX(0.93);">0</div>
<div class="t" style="left:711.20px;top:382.66px;transform:scaleX(0.93);">0</div>
<div class="t" style="left:769.80px;top:382.66px;transform:scaleX(0.93);">0</div>
<div class="t" style="left:828.40px;top:382.66px;transform:scaleX(0.93);">0</div>
<div class="t" style="left:162.80px;top:393.03px;transform:scaleX(0.9);">RBSC Souvenir</div>
<div class="t" style="left:325.80px;top:393.03px;transform:scaleX(0.9);">SOUV00001</div>
<div class="t" style="left:420.00px;top:393.03px;transform:scaleX(0.93);">0</div>
<div class="t" style="left:478.40px;top:393.03px;transform:scaleX(0.93);">0</div>
<div class="t" style="left:536.90px;top:393.03px;transform:scaleX(0.93);">-10</div>
<div class="t" style="left:595.10px;top:393.03px;transform:scaleX(0.93);">0</div>
<div class="t" style="left:653.10px;top:393.03px;transform:scaleX(0.93);">0</div>
<div class="t" style="left:711.20px;top:393.03px;transform:scaleX(0.93);">0</div>
<div class="t" style="left:769.80px;top:393.03px;transform:scaleX(0.93);">0</div>
<div class="t" style="left:828.40px;top:393.03px;transform:scaleX(0.93);">0</div>
<div class="t" style="left:162.80px;top:403.40px;transform:scaleX(0.9);">RBSC Tower Bags</div>
<div class="t" style="left:325.80px;top:403.40px;transform:scaleX(0.9);">RBSC0004</div>
<div class="t" style="left:420.00px;top:403.40px;transform:scaleX(0.93);">0</div>
<div class="t" style="left:478.40px;top:403.40px;transform:scaleX(0.93);">0</div>
<div class="t" style="left:536.90px;top:403.40px;transform:scaleX(0.93);">-1</div>
<div class="t" style="left:595.10px;top:403.40px;transform:scaleX(0.93);">0</div>
<div class="t" style="left:653.10px;top:403.40px;transform:scaleX(0.93);">0</div>
<div class="t" style="left:711.20px;top:403.40px;transform:scaleX(0.93);">0</div>
<div class="t" style="left:769.80px;top:403.40px;transform:scaleX(0.93);">0</div>
<div class="t" style="left:828.40px;top:403.40px;transform:scaleX(0.93);">0</div>
<div class="t" style="left:162.80px;top:413.77px;transform:scaleX(0.9);">RBSC Potatoes</div>
<div class="t" style="left:325.80px;top:413.77px;transform:scaleX(0.9);">RBSC0007</div>
<div class="t" style="left:420.00px;top:413.77px;transform:scaleX(0.93);">0</div>
<div class="t" style="left:478.40px;top:413.77px;transform:scaleX(0.93);">0</div>
<div class="t" style="left:536.90px;top:413.77px;transform:scaleX(0.93);">-6</div>
<div class="t" style="left:595.10px;top:413.77px;transform:scaleX(0.93);">0</div>
<div class="t" style="left:653.10px;top:413.77px;transform:scaleX(0.93);">0</div>
<div class="t" style="left:711.20px;top:413.77px;transform:scaleX(0.93);">0</div>
<div class="t" style="left:769.80px;top:413.77px;transform:scaleX(0.93);">0</div>
<div class="t" style="left:828.40px;top:413.77px;transform:scaleX(0.93);">0</div>
<div class="t" style="left:162.80px;top:424.14px;transform:scaleX(0.9);">RBSC Sausage small</div>
<div class="t" style="left:325.80px;top:424.14px;transform:scaleX(0.9);">FOOSAU00003</div>
<div class="t" style="left:420.00px;top:424.14px;transform:scaleX(0.93);">1</div>
<div class="t" style="left:478.40px;top:424.14px;transform:scaleX(0.93);">0</div>
<div class="t" style="left:536.90px;top:424.14px;transform:scaleX(0.93);">-7</div>
<div class="t" style="left:595.10px;top:424.14px;transform:scaleX(0.93);">0</div>
<div class="t" style="left:653.10px;top:424.14px;transform:scaleX(0.93);">0</div>
<div class="t" style="left:711.20px;top:424.14px;transform:scaleX(0.93);">0</div>
<div class="t" style="left:769.80px;top:424.14px;transform:scaleX(0.93);">0</div>
<div class="t" style="left:828.40px;top:424.14px;transform:scaleX(0.93);">0</div>
<div class="t" style="left:162.80px;top:434.51px;transform:scaleX(0.9);">RBSC Chicken Drumsticks</div>
<div class="t" style="left:325.80px;top:434.51px;transform:scaleX(0.9);">FOOMEAWH00004</div>
<div class="t" style="left:420.00px;top:434.51px;transform:scaleX(0.93);">7</div>
<div class="t" style="left:478.40px;top:434.51px;transform:scaleX(0.93);">0</div>
<div class="t" style="left:536.90px;top:434.51px;transform:scaleX(0.93);">-8</div>
<div class="t" style="left:595.10px;top:434.51px;transform:scaleX(0.93);">0</div>
<div class="t" style="left:653.10px;top:434.51px;transform:scaleX(0.93);">0</div>
<div class="t" style="left:711.20px;top:434.51px;transform:scaleX(0.93);">0</div>
<div class="t" style="left:769.80px;top:434.51px;transform:scaleX(0.93);">0</div>
<div class="t" style="left:828.40px;top:434.51px;transform:scaleX(0.93);">0</div>
<div class="t" style="left:162.80px;top:444.88px;transform:scaleX(0.9);">TOTAL QUANTITY</div>
<div class="t" style="left:420.00px;top:444.88px;transform:scaleX(0.93);">7244.9158</div>
<div class="t" style="left:478.40px;top:444.88px;transform:scaleX(0.93);">15.0000</div>
<div class="t" style="left:536.90px;top:444.88px;transform:scaleX(0.93);">-47920.1547</div>
<div class="t" style="left:595.10px;top:444.88px;transform:scaleX(0.93);">7005.6483</div>
<div class="t" style="left:653.10px;top:444.88px;transform:scaleX(0.93);">50003.0000</div>
<div class="t" style="left:711.20px;top:444.88px;transform:scaleX(0.93);">13.0000</div>
<div class="t" style="left:769.80px;top:444.88px;transform:scaleX(0.93);">0.0000</div>
<div class="t" style="left:828.40px;top:444.88px;transform:scaleX(0.93);">0.0000</div>
<div class="t" style="left:162.80px;top:455.25px;transform:scaleX(0.9);">TOTAL VALUE</div>
<div class="t" style="left:420.00px;top:455.25px;transform:scaleX(0.93);">B52 467.70</div>
<div class="t" style="left:478.40px;top:455.25px;transform:scaleX(0.93);">B10.38</div>
<div class="t" style="left:536.90px;top:455.25px;transform:scaleX(0.93);">B117 558.18</div>
<div class="t" style="left:595.10px;top:455.25px;transform:scaleX(0.93);">B49 091.76</div>
<div class="t" style="left:653.10px;top:455.25px;transform:scaleX(0.93);">B0.00</div>
<div class="t" style="left:711.20px;top:455.25px;transform:scaleX(0.93);">B0.00</div>
<div class="t" style="left:769.80px;top:455.25px;transform:scaleX(0.93);">B0.00</div>
<div class="t" style="left:828.40px;top:455.25px;transform:scaleX(0.93);">B0.00</div>
<div class="a" style="left:161.00px;top:464.02px;width:700.00px;height:10.28px;background:#f0f0f0;"></div>
<div class="a" style="left:169.60px;top:466.10px;width:644.70px;height:7.80px;background:linear-gradient(#d2d2d2,#c8c8c8);"></div>
<svg class="a" style="left:162.2px;top:467.5px" width="5" height="6" viewBox="0 0 5 6"><path d="M3.8 0.8 L1.4 3 L3.8 5.2" fill="none" stroke="#404040" stroke-width="1"/></svg>
<div class="a" style="left:156.00px;top:477.00px;width:704.00px;height:2.00px;background:linear-gradient(#7a7a7a,#5e5e5e);"></div>
</div>
</div>
</body></html>
